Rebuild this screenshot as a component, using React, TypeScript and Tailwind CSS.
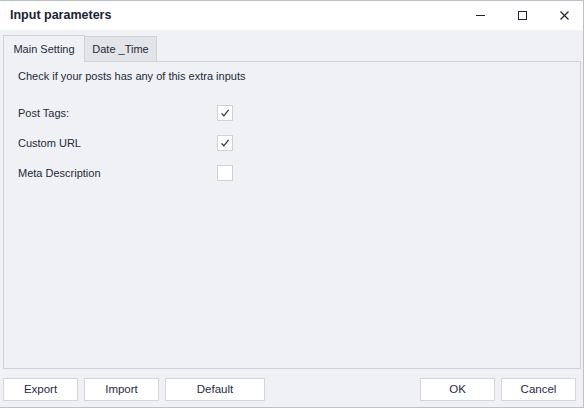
import { useState } from 'react';

const font = { fontFamily: '"Liberation Sans", Arial, sans-serif' };

interface Option {
  label: string;
  checked: boolean;
}

function CheckBox({ checked, onToggle }: { checked: boolean; onToggle: () => void }) {
  return (
    <button
      onClick={onToggle}
      className="w-[16px] h-[16px] bg-white border border-[#cfd1d6] flex items-center justify-center"
    >
      {checked && (
        <svg width="10" height="10" viewBox="0 0 10 10">
          <path d="M1.5 5.4 L3.9 7.8 L8.6 1.8" fill="none" stroke="#2c3340" strokeWidth="1.25" />
        </svg>
      )}
    </button>
  );
}

function DlgButton({ children, w }: { children: string; w: string }) {
  return (
    <button
      className={`${w} h-[23px] bg-white border border-[#d3d5da] text-[11.5px] text-[#1f2a44]`}
    >
      {children}
    </button>
  );
}

export default function App() {
  const [tab, setTab] = useState(0);
  const [options, setOptions] = useState<Option[]>([
    { label: 'Post Tags:', checked: true },
    { label: 'Custom URL', checked: true },
    { label: 'Meta Description', checked: false },
  ]);

  const toggle = (i: number) =>
    setOptions(options.map((o, j) => (j === i ? { ...o, checked: !o.checked } : o)));

  return (
    <div
      style={font}
      className="w-[584px] h-[408px] bg-[#f0f1f5] border-t border-r border-b border-[#bfc0c4] flex flex-col text-[#222a3a]"
    >
      {/* title bar */}
      <div className="h-[29px] bg-white flex items-center shrink-0 pr-[14px]">
        <span className="pl-[10px] text-[12.5px] font-bold text-[#1b2333] flex-1">Input parameters</span>
        <div className="flex items-center gap-[33px]">
          <svg width="9" height="9" viewBox="0 0 9 9">
            <path d="M0 4.5 H9" stroke="#1b2333" strokeWidth="1" />
          </svg>
          <svg width="9" height="9" viewBox="0 0 9 9">
            <rect x="0.5" y="0.5" width="8" height="8" fill="none" stroke="#1b2333" strokeWidth="1" />
          </svg>
          <svg width="9" height="9" viewBox="0 0 9 9">
            <path d="M0.5 0.5 L8.5 8.5 M8.5 0.5 L0.5 8.5" stroke="#1b2333" strokeWidth="1.2" />
          </svg>
        </div>
      </div>

      {/* tabs */}
      <div className="px-[3px] pt-[6px] shrink-0 flex flex-col">
        <div className="flex items-end h-[25px]">
          <button
            onClick={() => setTab(0)}
            className={`w-[82px] text-[11px] border-l border-t border-r border-[#d0d2d7] ${
              tab === 0 ? 'h-[27px] bg-[#f0f1f5] relative top-[1px]' : 'h-[25px] bg-[#e3e4e8]'
            }`}
          >
            Main Setting
          </button>
          <button
            onClick={() => setTab(1)}
            className={`w-[72px] text-[11px] border-t border-r border-[#d0d2d7] ${
              tab === 1 ? 'h-[27px] bg-[#f0f1f5] relative top-[1px]' : 'h-[25px] bg-[#e3e4e8]'
            }`}
          >
            Date _Time
          </button>
        </div>
        <div className="h-[308px] w-[578px] border border-[#d0d2d7] pl-[14px] pt-[7px]">
          {tab === 0 && (
            <>
              <p className="text-[11px] leading-[15px]">Check if your posts has any of this extra inputs</p>
              <div className="mt-[21px] flex flex-col gap-[14px]">
                {options.map((o, i) => (
                  <div key={o.label} className="flex items-center h-[16px]">
                    <span className="w-[199px] text-[11px]">{o.label}</span>
                    <CheckBox checked={o.checked} onToggle={() => toggle(i)} />
                  </div>
                ))}
              </div>
            </>
          )}
        </div>
      </div>

      {/* footer buttons */}
      <div className="flex items-start flex-1 pt-[9px] pl-[3px] pr-[7px]">
        <div className="flex gap-[6px]">
          <DlgButton w="w-[75px]">Export</DlgButton>
          <DlgButton w="w-[75px]">Import</DlgButton>
          <DlgButton w="w-[100px]">Default</DlgButton>
        </div>
        <div className="flex gap-[6px] ml-auto">
          <DlgButton w="w-[75px]">OK</DlgButton>
          <DlgButton w="w-[75px]">Cancel</DlgButton>
        </div>
      </div>
    </div>
  );
}
